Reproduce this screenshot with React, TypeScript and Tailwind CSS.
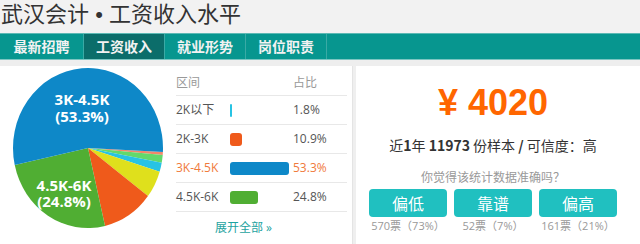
import React from "react";

interface Slice {
  value: number;
  color: string;
}

interface Row {
  range: string;
  percent: string;
  barWidth: number;
  barColor: string;
  active?: boolean;
}

const slices: Slice[] = [
  { value: 0.6, color: "#f3876a" },
  { value: 1.5, color: "#62d96b" },
  { value: 1.8, color: "#28c3e3" },
  { value: 5.4, color: "#dfe01c" },
  { value: 10.9, color: "#ef5a1b" },
  { value: 24.8, color: "#50ae33" },
  { value: 53.3, color: "#0e88c8" },
];

const rows: Row[] = [
  { range: "2K以下", percent: "1.8%", barWidth: 2, barColor: "#28c3e3" },
  { range: "2K-3K", percent: "10.9%", barWidth: 12, barColor: "#ef5a1b" },
  { range: "3K-4.5K", percent: "53.3%", barWidth: 59, barColor: "#0e88c8", active: true },
  { range: "4.5K-6K", percent: "24.8%", barWidth: 28, barColor: "#50ae33" },
];

const tabs = ["最新招聘", "工资收入", "就业形势", "岗位职责"];

const votes = [
  { label: "偏低", count: "570票（73%）" },
  { label: "靠谱", count: "52票（7%）" },
  { label: "偏高", count: "161票（21%）" },
];

const PieChart: React.FC = () => {
  const cx = 88;
  const cy = 82;
  const rx = 75;
  const ry = 80;
  const total = slices.reduce((s, d) => s + d.value, 0);
  let angle = (2.9 * Math.PI) / 180;

  const paths = slices.map((d, i) => {
    const sweep = (d.value / total) * Math.PI * 2;
    const a0 = angle;
    const a1 = angle + sweep;
    angle = a1;
    const x0 = cx + rx * Math.cos(a0);
    const y0 = cy + ry * Math.sin(a0);
    const x1 = cx + rx * Math.cos(a1);
    const y1 = cy + ry * Math.sin(a1);
    const large = sweep > Math.PI ? 1 : 0;
    return (
      <path
        key={i}
        d={`M${cx} ${cy} L${x0} ${y0} A${rx} ${ry} 0 ${large} 1 ${x1} ${y1} Z`}
        fill={d.color}
      />
    );
  });

  return (
    <svg width="168" height="178" viewBox="0 0 168 178">
      {paths}
      <g
        fill="#ffffff"
        fontSize="15"
        fontWeight="700"
        fontFamily="'Open Sans', 'Liberation Sans', sans-serif"
        textAnchor="middle"
      >
        <text x="82" y="39">3K-4.5K</text>
        <text x="82" y="56">(53.3%)</text>
        <text x="64" y="125">4.5K-6K</text>
        <text x="64" y="141">(24.8%)</text>
      </g>
    </svg>
  );
};

export default function App() {
  return (
    <div className="w-[640px] h-[244px] overflow-hidden bg-white font-['Open_Sans','Noto_Sans_CJK_SC',sans-serif]">
      {/* title */}
      <div className="h-[33px] bg-[#f2f2f2] pl-[1px]">
        <h1 className="text-[22px] leading-[24px] text-[#333] font-['Noto_Sans_CJK_SC',sans-serif] font-normal whitespace-nowrap">
          武汉会计<span className="font-['Liberation_Sans',sans-serif]"> • </span>工资收入水平
        </h1>
      </div>

      {/* nav */}
      <div className="h-[27px] bg-[#07968f] border-t border-[#5cb9b4] border-b border-b-[#7cc6c2] flex">
        {tabs.map((t, i) => (
          <div
            key={t}
            className={`${i === 0 ? "w-[84px]" : "w-[81px]"} ${
              i === 1 ? "bg-[#0b6d6a]" : ""
            } border-r border-[#3aaaa5] flex items-center justify-center text-[14px] font-bold text-[#f2f2f2] font-['Noto_Sans_CJK_SC',sans-serif]`}
          >
            {t}
          </div>
        ))}
      </div>
      <div className="h-[6px] bg-[#eeeeee]" />

      {/* content */}
      <div className="flex h-[178px]">
        <div className="w-[168px]">
          <PieChart />
        </div>

        <div className="w-[184px] pl-[8px] pr-[5px] text-[12px] text-[#555]">
          <div className="h-[30px] flex items-end pb-[4px] border-b border-[#e8e8e8] text-[#999] leading-[16px]">
            <span className="w-[117px]">区间</span>
            <span>占比</span>
          </div>
          {rows.map((r) => (
            <div
              key={r.range}
              className={`h-[29px] flex items-center border-b border-[#e8e8e8] ${
                r.active ? "text-[#f07a3c]" : ""
              }`}
            >
              <span className="w-[54px]">{r.range}</span>
              <span className="w-[63px] flex items-center">
                <span
                  className="h-[13px] rounded-[3px]"
                  style={{ width: r.barWidth, backgroundColor: r.barColor }}
                />
              </span>
              <span>{r.percent}</span>
            </div>
          ))}
          <div className="h-[32px] flex items-center pl-[39px] text-[#1ea3a0]">
            展开全部 »
          </div>
        </div>

        <div className="w-[4px] bg-[#efefef] border-l border-[#e4e4e4]" />

        <div className="flex-1 pl-[13px]">
          <div className="w-[248px] flex flex-col items-center">
            <div className="mt-[17px] h-[40px] leading-[40px] text-[36px] font-bold text-[#ff6600] font-['Liberation_Sans',sans-serif]">
              ¥ 4020
            </div>
            <div className="mt-[12px] h-[20px] leading-[20px] text-[14px] text-[#333] font-['Noto_Sans_CJK_SC',sans-serif]">
              近<b>1</b>年 <b>11973</b> 份样本 <b>/</b> 可信度：高
            </div>
            <div className="mt-[15px] h-[16px] leading-[16px] text-[12px] text-[#999]">
              你觉得该统计数据准确吗？
            </div>
            <div className="mt-[3px] flex gap-[7px]">
              {votes.map((v) => (
                <div key={v.label} className="w-[78px] flex flex-col items-center">
                  <button className="w-[78px] h-[28px] rounded-[4px] bg-[#20c0c0] text-white text-[16px] leading-[28px] font-['Noto_Sans_CJK_SC',sans-serif]">
                    {v.label}
                  </button>
                  <span className="mt-[1px] text-[11px] leading-[16px] text-[#999] whitespace-nowrap">
                    {v.count}
                  </span>
                </div>
              ))}
            </div>
          </div>
        </div>
      </div>
    </div>
  );
}
